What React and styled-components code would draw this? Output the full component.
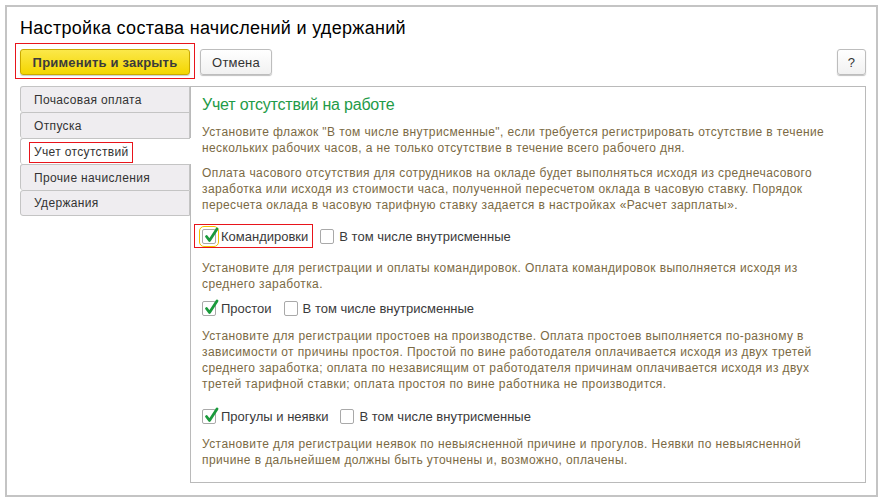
import React from 'react'
import styled, { createGlobalStyle } from 'styled-components'

const GlobalStyle = createGlobalStyle`
  body {
    margin: 0;
    background: #fff;
    font-family: Arial, "Liberation Sans", sans-serif;
  }
`

const Frame = styled.div`
  box-sizing: border-box;
  width: 873px;
  height: 492px;
  margin: 5px;
  border: 2px solid #c4c4c4;
  padding: 10px 10px 12px 13px;
  display: flex;
  flex-direction: column;
`

const Title = styled.h1`
  margin: 0;
  font-size: 18px;
  line-height: 22px;
  font-weight: normal;
  letter-spacing: 0.3px;
  color: #000;
`

const Toolbar = styled.div`
  display: flex;
  align-items: center;
  gap: 10px;
  margin-top: 10px;
`

const Highlight = styled.span`
  position: relative;
  display: inline-flex;
  align-items: center;

  &::after {
    content: '';
    position: absolute;
    top: ${p => p.$t}px;
    right: ${p => p.$r}px;
    bottom: ${p => p.$b}px;
    left: ${p => p.$l}px;
    border: 1px solid #e8141b;
    pointer-events: none;
  }
`

const Button = styled.button`
  box-sizing: border-box;
  height: 26px;
  padding: 0;
  border-radius: 3px;
  font-family: Arial, "Liberation Sans", sans-serif;
  font-size: 13px;
  letter-spacing: 0.2px;
  color: #333;
  cursor: pointer;
  border: 1px solid #bdbdbd;
  background: linear-gradient(#ffffff, #f1f1f1);
  box-shadow: 0 1px 1px rgba(0, 0, 0, 0.25);
  width: ${p => p.$w}px;
`

const PrimaryButton = styled(Button)`
  font-weight: bold;
  color: #3b3b3b;
  border-color: #c9a900;
  background: linear-gradient(#fbe84a, #f4d600);
  box-shadow: 0 1px 1px rgba(0, 0, 0, 0.2);
  letter-spacing: 0.2px;
`

const Spacer = styled.div`
  flex: 1;
`

const Body = styled.div`
  flex: 1;
  display: flex;
  margin-top: 11px;
`

const Tabs = styled.div`
  width: 170px;
  display: flex;
  flex-direction: column;
`

const Tab = styled.div`
  box-sizing: border-box;
  height: 26px;
  display: flex;
  align-items: center;
  padding-left: 13px;
  font-size: 12px;
  letter-spacing: 0.35px;
  color: #333;
  background: ${p => (p.$active ? '#fff' : '#efedf0')};
  border: 1px solid #c4c4c4;
  border-right: ${p => (p.$active ? 'none' : '1px solid #c4c4c4')};
  border-bottom: none;
  border-radius: 3px 0 0 3px;

  &:last-child {
    border-bottom: 1px solid #c4c4c4;
  }
`

const Panel = styled.div`
  flex: 1;
  border: 1px solid #bababa;
  border-left: none;
  position: relative;
  padding: 8px 0 0 12px;

  &::before {
    content: '';
    position: absolute;
    left: 0;
    top: 77px;
    bottom: -1px;
    border-left: 1px solid #bababa;
  }
  &::after {
    content: '';
    position: absolute;
    left: 0;
    top: -1px;
    height: 52px;
    border-left: 1px solid #bababa;
  }
`

const Heading = styled.h2`
  margin: 0;
  font-size: 16px;
  line-height: 20px;
  font-weight: normal;
  letter-spacing: -0.2px;
  color: #1f9b48;
`

const Note = styled.p`
  margin: ${p => p.$mt}px 0 0;
  font-size: 12px;
  line-height: 16px;
  letter-spacing: 0.4px;
  color: #7b6a44;
  white-space: nowrap;
`

const Row = styled.div`
  display: flex;
  align-items: center;
  height: 22px;
  margin-top: ${p => p.$mt}px;
`

const Check = styled.label`
  display: inline-flex;
  align-items: center;
  gap: 5px;
  margin-right: 12px;
  font-size: 13px;
  color: #3a3a3a;
`

const Box = styled.span`
  position: relative;
  box-sizing: border-box;
  width: 14px;
  height: 15px;
  border: 1px solid #a9a9a9;
  border-radius: 2px;
  background: #fff;
  outline: ${p => (p.$focused ? '1px solid #f3c300' : 'none')};
  outline-offset: 2px;

  svg {
    position: absolute;
    left: 1px;
    top: -3px;
  }
`

const Checkbox = ({ checked, focused, children }) => (
  <Check>
    <Box $focused={focused}>
      {checked && (
        <svg width="15" height="17" viewBox="0 0 15 17">
          <path d="M2.5 9.5 L5.5 13.5 L13 2" fill="none" stroke="#1a9a3c" strokeWidth="2.8" strokeLinecap="round" strokeLinejoin="round" />
        </svg>
      )}
    </Box>
    {children}
  </Check>
)

const tabs = ['Почасовая оплата', 'Отпуска', 'Учет отсутствий', 'Прочие начисления', 'Удержания']

export default function App() {
  return (
    <>
      <GlobalStyle />
      <Frame>
        <Title>Настройка состава начислений и удержаний</Title>
        <Toolbar>
          <Highlight $t={-6} $r={-5} $b={-4} $l={-5}>
            <PrimaryButton $w={170}>Применить и закрыть</PrimaryButton>
          </Highlight>
          <Button $w={72}>Отмена</Button>
          <Spacer />
          <Button $w={29}>?</Button>
        </Toolbar>
        <Body>
          <Tabs>
            {tabs.map(t => (
              <Tab key={t} $active={t === 'Учет отсутствий'}>
                {t === 'Учет отсутствий' ? (
                  <Highlight $t={-3} $r={-4} $b={-4} $l={-5}>{t}</Highlight>
                ) : (
                  t
                )}
              </Tab>
            ))}
          </Tabs>
          <Panel>
            <Heading>Учет отсутствий на работе</Heading>
            <Note $mt={9}>
              Установите флажок "В том числе внутрисменные", если требуется регистрировать отсутствие в течение
              <br />
              нескольких рабочих часов, а не только отсутствие в течение всего рабочего дня.
            </Note>
            <Note $mt={9}>
              Оплата часового отсутствия для сотрудников на окладе будет выполняться исходя из среднечасового
              <br />
              заработка или исходя из стоимости часа, полученной пересчетом оклада в часовую ставку. Порядок
              <br />
              пересчета оклада в часовую тарифную ставку задается в настройках «Расчет зарплаты».
            </Note>
            <Row $mt={12}>
              <Highlight $t={-5} $r={7} $b={-4} $l={-8}>
                <Checkbox checked focused>Командировки</Checkbox>
              </Highlight>
              <Checkbox>В том числе внутрисменные</Checkbox>
            </Row>
            <Note $mt={13}>
              Установите для регистрации и оплаты командировок. Оплата командировок выполняется исходя из
              <br />
              среднего заработка.
            </Note>
            <Row $mt={5}>
              <Checkbox checked>Простои</Checkbox>
              <Checkbox>В том числе внутрисменные</Checkbox>
            </Row>
            <Note $mt={9}>
              Установите для регистрации простоев на производстве. Оплата простоев выполняется по-разному в
              <br />
              зависимости от причины простоя. Простой по вине работодателя оплачивается исходя из двух третей
              <br />
              среднего заработка; оплата по независящим от работодателя причинам оплачивается исходя из двух
              <br />
              третей тарифной ставки; оплата простоя по вине работника не производится.
            </Note>
            <Row $mt={13}>
              <Checkbox checked>Прогулы и неявки</Checkbox>
              <Checkbox>В том числе внутрисменные</Checkbox>
            </Row>
            <Note $mt={9}>
              Установите для регистрации неявок по невыясненной причине и прогулов. Неявки по невыясненной
              <br />
              причине в дальнейшем должны быть уточнены и, возможно, оплачены.
            </Note>
          </Panel>
        </Body>
      </Frame>
    </>
  )
}
